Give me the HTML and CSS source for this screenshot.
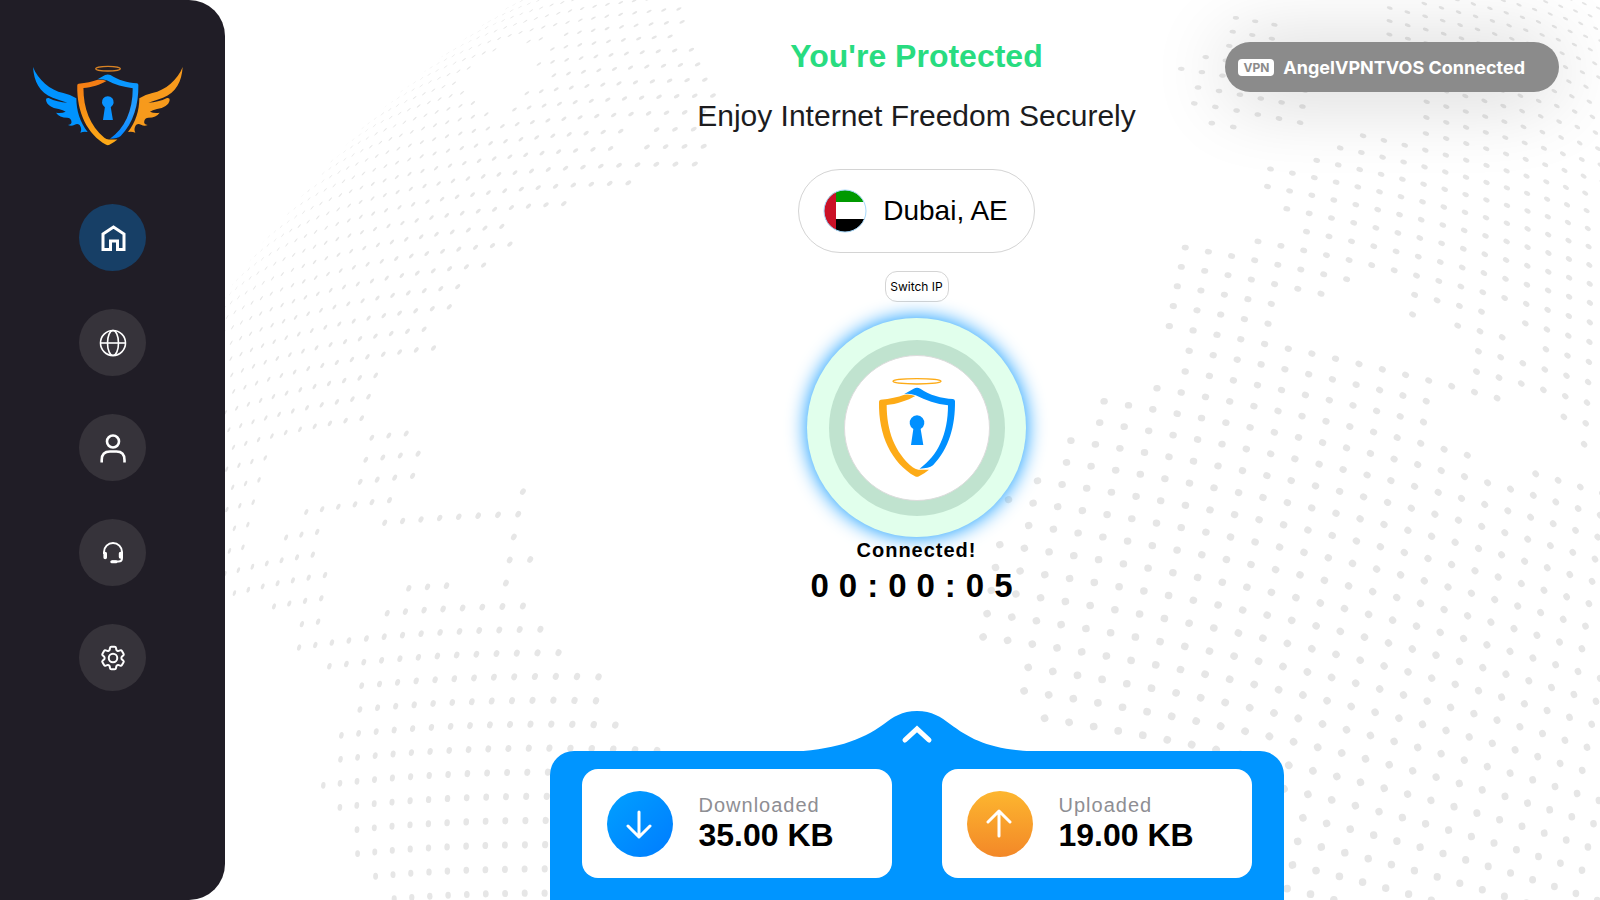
FILE: index.html
```
<!DOCTYPE html>
<html lang="en">

<head>
    <meta charset="UTF-8" />
    <meta name="viewport" content="width=device-width, initial-scale=1.0" />
    <title>Angel VPN</title>
    <link rel="stylesheet" href="styles.css">
</head>

<body>
    <svg id="globe" class="globe" viewBox="0 0 1600 900" preserveAspectRatio="xMidYMid slice" aria-hidden="true"></svg>

    <aside class="sidebar">
        <svg class="logo" viewBox="93 70 462 255" role="img" aria-label="Angel VPN">
            <defs>
                <linearGradient id="logoOrange" x1="0" y1="0" x2="0" y2="1">
                    <stop offset="0" stop-color="#f47b14" />
                    <stop offset="1" stop-color="#fdab17" />
                </linearGradient>
                <linearGradient id="logoBlue" x1="0" y1="0" x2="0" y2="1">
                    <stop offset="0" stop-color="#0096ff" />
                    <stop offset="0.6" stop-color="#2a9cff" />
                    <stop offset="1" stop-color="#0084ff" />
                </linearGradient>
                <path id="wing" d="M99 82C114 120 150 152 190 160Q210 164 229 176C229 212 240 248 263 277Q252 274 241 279Q247 268 239 256Q232 250 224 255Q214 261 204 256Q217 254 214 243Q211 234 202 234Q178 234 168 219Q184 222 197 216Q190 211 176 208C156 205 140 196 138 181Q137 174 146 175Q172 188 202 189Q180 182 158 174C118 158 102 126 99 82Z" />
            </defs>
            <use href="#wing" fill="#0093ff" />
            <use href="#wing" fill="#f79a1c" transform="matrix(-1 0 0 1 647 0)" />
            <ellipse cx="324" cy="87" rx="37" ry="7" fill="none" stroke="#d98324" stroke-width="4" />
            <g transform="matrix(.804 0 0 .796 -7.8 -108)">
                <path fill="url(#logoOrange)" d="M407 291C385 304 350 316 321 318C321 395 345 460 399 505Q406 511 416 512H448Q435 523 418 532Q412 535 406 532C335 490 296 410 298 308Q298 303 303 302Q345 298 374 287Q392 285 407 291Z" />
                <path fill="url(#logoBlue)" d="M374 285L402 269Q412 264 422 269C450 288 485 298 520 300Q526 301 526 307C527 380 508 450 460 499Q447 509 420 509C475 470 505 405 505 319C470 315 438 305 408 289Q392 283 374 285Z" />
                <path fill="#0a93ff" d="M401 390A22 22 0 1 1 423 390L431 438H394Z" />
            </g>
        </svg>

        <nav class="menu">
            <a class="menu-item active" href="#home" aria-label="Home">
                <svg width="26" height="28" viewBox="0 0 26 28" fill="none" stroke="#fff" stroke-width="3">
                    <path d="M3 10L13.500 3L24 10V25.500H17.500V17H10.500V25.500H3Z" />
                </svg>
            </a>
            <a class="menu-item" href="#locations" aria-label="Locations">
                <svg width="28" height="28" viewBox="0 0 28 28" fill="none" stroke="#fff" stroke-width="1.600">
                    <circle cx="14" cy="14" r="12.500" />
                    <ellipse cx="14" cy="14" rx="5.500" ry="12.500" />
                    <path d="M1.500 14H26.500" />
                </svg>
            </a>
            <a class="menu-item" href="#account" aria-label="Account">
                <svg width="28" height="30" viewBox="0 0 28 30" fill="none" stroke="#fff" stroke-width="2.600">
                    <circle cx="14" cy="8.500" r="6" />
                    <path d="M2.700 29.500V27Q2.700 18.500 11 18.500H17.500Q25.500 18.500 25.500 27V29.500" />
                </svg>
            </a>
            <a class="menu-item" href="#support" aria-label="Support">
                <svg width="22" height="22" viewBox="0 0 22 22" fill="none" stroke="#fff" stroke-width="2">
                    <path d="M2 12V10A9 9 0 0 1 20 10V16Q20 19.500 16.500 19.500H10" />
                    <path d="M9.800 19.800H14" stroke-width="3" stroke-linecap="round" />
                    <path d="M3.200 11.500V15.500M18.600 11.500V15" stroke-width="3.600" stroke-linecap="round" />
                </svg>
            </a>
            <a class="menu-item" href="#settings" aria-label="Settings">
                <svg width="30" height="30" viewBox="0 0 24 24" fill="none" stroke="#fff" stroke-width="1.600">
                    <path d="M9.594 3.940c.09-.542.56-.94 1.110-.94h2.593c.55 0 1.020.398 1.110.94l.213 1.281c.063.374.313.686.645.87.074.04.147.083.22.127.325.196.72.257 1.075.124l1.217-.456a1.125 1.125 0 0 1 1.370.49l1.296 2.247a1.125 1.125 0 0 1-.26 1.431l-1.003.827c-.293.241-.438.613-.43.992a7.723 7.723 0 0 1 0 .255c-.008.378.137.75.43.991l1.004.827c.424.35.534.955.26 1.430l-1.298 2.247a1.125 1.125 0 0 1-1.369.491l-1.217-.456c-.355-.133-.75-.072-1.076.124a6.470 6.470 0 0 1-.22.128c-.331.183-.581.495-.644.869l-.213 1.281c-.09.543-.56.94-1.110.94h-2.594c-.55 0-1.019-.398-1.110-.94l-.213-1.281c-.062-.374-.312-.686-.644-.87a6.520 6.520 0 0 1-.22-.127c-.325-.196-.72-.257-1.076-.124l-1.217.456a1.125 1.125 0 0 1-1.369-.49l-1.297-2.247a1.125 1.125 0 0 1 .26-1.431l1.004-.827c.292-.24.437-.613.43-.991a6.932 6.932 0 0 1 0-.255c.007-.38-.138-.751-.43-.992l-1.004-.827a1.125 1.125 0 0 1-.26-1.430l1.297-2.247a1.125 1.125 0 0 1 1.370-.491l1.216.456c.356.133.751.072 1.076-.124.072-.044.146-.086.22-.128.332-.183.582-.495.644-.869l.214-1.280Z" />
                    <circle cx="12" cy="12" r="3.400" />
                </svg>
            </a>
        </nav>
    </aside>

    <main class="main">
        <h1>You're Protected</h1>
        <p class="subtitle">Enjoy Internet Freedom Securely</p>

        <button class="location">
            <svg class="flag" viewBox="0 0 44 44" aria-hidden="true">
                <clipPath id="round"><circle cx="22" cy="22" r="21" /></clipPath>
                <g clip-path="url(#round)">
                    <rect width="44" height="44" fill="#fff" />
                    <rect width="44" height="13" fill="#090" />
                    <rect y="30" width="44" height="14" fill="#000" />
                    <rect width="13" height="44" fill="#cb1127" />
                </g>
                <circle cx="22" cy="22" r="21" fill="none" stroke="#a6d8fb" />
            </svg>
            Dubai, AE
        </button>
        <button class="switch">Switch IP</button>

        <button class="connect" aria-label="Disconnect">
            <span class="ring">
                <span class="core">
                    <svg width="78" height="101" viewBox="295 234 234 303" aria-hidden="true">
                        <ellipse cx="412" cy="247" rx="72" ry="8" fill="none" stroke="#fdab17" stroke-width="4" />
                        <path fill="#fdab17" d="M407 291C385 304 350 316 321 318C321 395 345 460 399 505Q406 511 416 512H448Q435 523 418 532Q412 535 406 532C335 490 296 410 298 308Q298 303 303 302Q345 298 374 287Q392 285 407 291Z" />
                        <path fill="#0090ff" d="M374 285L402 269Q412 264 422 269C450 288 485 298 520 300Q526 301 526 307C527 380 508 450 460 499Q447 509 420 509C475 470 505 405 505 319C470 315 438 305 408 289Q392 283 374 285Z" />
                        <path fill="#0090ff" d="M401 390A22 22 0 1 1 423 390L431 438H394Z" />
                    </svg>
                </span>
            </span>
        </button>
        <div class="status">Connected!</div>
        <div class="timer">00:00:05</div>

        <section class="panel">
            <svg class="bump" width="260" height="42" viewBox="0 0 260 42" aria-hidden="true">
                <path fill="#0095ff" d="M0 42V41C46 39 74 30 97 13C106 6 115 0 130 0S154 6 163 13C186 30 206 40 260 41V42Z" />
                <path d="M118 29L130 18L142 29" fill="none" stroke="#fff" stroke-width="5" stroke-linecap="round" />
            </svg>
            <div class="card">
                <span class="arrow down">
                    <svg width="30" height="30" viewBox="0 0 30 30" fill="none" stroke="#fff" stroke-width="3" stroke-linecap="round" stroke-linejoin="round">
                        <path d="M14 3V28M3 17L14 28L25 17" />
                    </svg>
                </span>
                <div class="traffic">
                    <div class="label">Downloaded</div>
                    <div class="value">35.00 KB</div>
                </div>
            </div>
            <div class="card">
                <span class="arrow up">
                    <svg width="30" height="30" viewBox="0 0 30 30" fill="none" stroke="#fff" stroke-width="3" stroke-linecap="round" stroke-linejoin="round">
                        <path d="M14 27V2M3 13L14 2L25 13" />
                    </svg>
                </span>
                <div class="traffic">
                    <div class="label">Uploaded</div>
                    <div class="value">19.00 KB</div>
                </div>
            </div>
        </section>
    </main>

    <div class="toast" role="status">
        <span class="badge">VPN</span>
        AngelVPNTVOS Connected
    </div>

    <script src="globe.js"></script>
</body>

</html>
```
FILE: styles.css
```
* {
    box-sizing: border-box;
}

body {
    margin: 0;
    min-height: 100vh;
    display: flex;
    background: #fff;
    color: #000;
    font-family: "Liberation Sans", Arial, sans-serif;
}

button {
    padding: 0;
    border: none;
    background: #fff;
    color: #000;
    font-family: inherit;
    cursor: pointer;
}

.globe {
    position: absolute;
    inset: 0;
    width: 100%;
    height: 100%;
    z-index: -1;
    fill: #e6e6e6;
}

/* sidebar */
.sidebar {
    flex: 0 0 225px;
    display: flex;
    flex-direction: column;
    padding-top: 63px;
    border-radius: 0 36px 36px 0;
    background: #201d26;
}

.logo {
    width: 154px;
    height: 85px;
    margin-left: 31px;
}

.menu {
    display: flex;
    flex-direction: column;
    align-items: center;
    gap: 38px;
    margin-top: 56px;
}

.menu-item {
    display: flex;
    align-items: center;
    justify-content: center;
    width: 67px;
    height: 67px;
    border-radius: 50%;
    background: #36333a;
}

.menu-item.active {
    background: #173f66;
}

/* main column */
.main {
    flex: 1;
    display: flex;
    flex-direction: column;
    align-items: center;
    padding: 36px 0 0 8px;
}

h1 {
    margin: 0;
    font-size: 32px;
    line-height: 40px;
    color: #28dc80;
}

.subtitle {
    margin: 20px 0 33px;
    font-size: 30px;
    line-height: 40px;
    color: #1c1c1e;
}

.location {
    display: flex;
    align-items: center;
    gap: 16px;
    height: 84px;
    padding: 0 26px 0 24px;
    border: 1px solid #d4d4d4;
    border-radius: 42px;
    font-size: 28px;
}

.flag {
    width: 44px;
    height: 44px;
}

.switch {
    width: 64px;
    height: 31px;
    margin: 18px 0 16px;
    border: 1px solid #d4d4d4;
    border-radius: 12px;
    font-family: Inter, sans-serif;
    font-size: 12px;
}

.connect,
.ring,
.core {
    display: flex;
    align-items: center;
    justify-content: center;
    border-radius: 50%;
}

.connect {
    width: 219px;
    height: 219px;
    background: #e1ffec;
    box-shadow: 0 0 20px #0094ff;
}

.ring {
    width: 176px;
    height: 176px;
    background: #c0e3cf;
}

.core {
    width: 146px;
    height: 146px;
    border: 1px solid #dcdcdc;
    background: #fff;
}

.status {
    font-size: 20px;
    font-weight: bold;
    line-height: 26px;
    letter-spacing: 1px;
}

.timer {
    margin-top: 3px;
    font-size: 33px;
    font-weight: bold;
    line-height: 40px;
    letter-spacing: 10px;
}

/* traffic panel */
.panel {
    position: relative;
    display: flex;
    gap: 50px;
    margin-top: auto;
    padding: 18px 32px 22px;
    border-radius: 24px 24px 0 0;
    background: #0095ff;
}

.bump {
    position: absolute;
    left: 50%;
    bottom: 100%;
    margin: 0 0 -2px -130px;
}

.card {
    display: flex;
    align-items: center;
    gap: 26px;
    width: 310px;
    height: 109px;
    padding-left: 25px;
    border-radius: 16px;
    background: #fff;
}

.arrow {
    display: flex;
    align-items: center;
    justify-content: center;
    width: 66px;
    height: 66px;
    border-radius: 50%;
}

.down {
    background: linear-gradient(135deg, #00a0ff, #007cff);
}

.up {
    background: linear-gradient(#fdb62f, #f38828);
}

.traffic {
    padding-bottom: 2px;
}

.label {
    font-size: 20px;
    line-height: 24px;
    letter-spacing: 1px;
    color: #8e8e93;
}

.value {
    font-size: 32px;
    font-weight: bold;
    line-height: 36px;
}

/* system notification over the page */
.toast {
    position: absolute;
    top: 42px;
    right: 41px;
    display: flex;
    align-items: center;
    gap: 9px;
    height: 50px;
    padding: 0 34px 0 13px;
    border-radius: 25px;
    background: #8b8b8b;
    box-shadow: 0 4px 80px rgba(0, 0, 0, 0.2);
    color: #fff;
    font-family: Inter, sans-serif;
    font-size: 18px;
    font-weight: 700;
}

.badge {
    padding: 0 5px;
    border-radius: 4px;
    background: #fff;
    color: #8b8b8b;
    font-size: 12px;
    line-height: 17px;
}
```
FILE: globe.js
```
// dotted globe: lat/lng grid on a tilted sphere, kept only where there is land
const CX = 1115, CY = 885, R = 1068;
const ROLL = 10.5 * Math.PI / 180;
const TILT = -16 * Math.PI / 180;
const STEP_LAT = 1.3 * Math.PI / 180;
const STEP_LNG = 1.35 * Math.PI / 180;

const land = [
    // north
    [[180, 340], [400, 80], [520, -20], [700, -20], [687, 20], [678, 32], [683, 47], [712, 50], [715, 90], [708, 110], [710, 140], [700, 165], [693, 180],
     [680, 165], [645, 170], [638, 188], [580, 198], [576, 210], [570, 226], [560, 222], [558, 212], [518, 225], [508, 252], [490, 262], [486, 275],
     [466, 292], [460, 300], [444, 316], [438, 335], [432, 358], [385, 372], [378, 388], [372, 425], [338, 432], [320, 438], [272, 452], [266, 470],
     [262, 490], [257, 510], [250, 552], [275, 553], [278, 530], [300, 520], [292, 508], [352, 490], [352, 474], [358, 462], [358, 432], [412, 422],
     [426, 440], [424, 452], [420, 480], [418, 496], [330, 512], [328, 525], [322, 552], [335, 558], [334, 575], [332, 590], [330, 612], [329, 635],
     [294, 640], [292, 628], [270, 622], [260, 604], [236, 600], [234, 614], [180, 620]],
    [[372, 535], [374, 508], [464, 496], [466, 511], [502, 508], [505, 489], [524, 489], [522, 508], [536, 512], [533, 545], [529, 570], [528, 582],
     [508, 582], [508, 560], [511, 540], [508, 528], [372, 545]],
    // south
    [[395, 590], [455, 580], [456, 604], [492, 604], [494, 580], [524, 580], [522, 600], [526, 622], [540, 624], [542, 645], [574, 648], [578, 668],
     [610, 672], [608, 695], [610, 715], [628, 720], [632, 740], [665, 745], [700, 800], [700, 900], [362, 900], [360, 872], [345, 850], [343, 830],
     [330, 810], [316, 800], [318, 785], [328, 780], [328, 745], [342, 722], [356, 715], [357, 680], [330, 672], [328, 660], [292, 660], [292, 645],
     [375, 635], [376, 612], [394, 608]],
    // east
    [[1226, 14], [1280, 22], [1284, 50], [1318, 96], [1314, 140], [1235, 126], [1216, 138], [1206, 134], [1190, 104], [1176, 70], [1198, 45], [1222, 44]],
    [[1420, -10], [1410, 0], [1376, 12], [1376, 45], [1390, 80], [1440, 92], [1418, 100], [1418, 130], [1402, 134], [1378, 128], [1345, 142], [1325, 150],
     [1300, 160], [1255, 150], [1247, 180], [1268, 205], [1288, 215], [1284, 232], [1240, 240], [1190, 230], [1180, 260], [1172, 300], [1160, 385],
     [1130, 396], [1105, 392], [1098, 425], [1070, 432], [1064, 465], [1035, 478], [1008, 495], [1008, 510], [1024, 514], [1024, 535], [996, 542],
     [978, 650], [1020, 660], [1016, 708], [1036, 720], [1040, 740], [1150, 760], [1150, 910], [1610, 910], [1610, -10]]
];

const water = [
    [[560, 32], [533, 42], [510, 42], [480, 58], [467, 73], [450, 92], [467, 93], [492, 105], [495, 117], [487, 132], [483, 143], [497, 128],
     [510, 105], [520, 90], [537, 85], [542, 77], [535, 68], [548, 52]],
    [[623, 133], [647, 123], [638, 150], [617, 157]],
    [[1289, 293], [1337, 295], [1360, 282], [1388, 287], [1404, 295], [1402, 313], [1398, 357], [1375, 359], [1351, 353], [1334, 345], [1333, 327],
     [1323, 326], [1322, 343], [1303, 342], [1287, 332], [1287, 307]],
    [[1415, 295], [1433, 301], [1452, 307], [1450, 325], [1472, 333], [1469, 367], [1466, 384], [1447, 379], [1423, 372], [1407, 367], [1408, 347], [1415, 308]],
    [[1490, 307], [1507, 302], [1523, 308], [1523, 327], [1543, 333], [1543, 365], [1527, 358], [1508, 353], [1509, 333], [1488, 325]],
    [[1424, 420], [1445, 412], [1453, 402], [1470, 398], [1495, 406], [1523, 393], [1545, 402], [1560, 412], [1558, 432], [1578, 440], [1574, 460],
     [1610, 466], [1610, 495], [1590, 490], [1535, 470], [1510, 470], [1500, 482], [1495, 480], [1480, 455], [1437, 441], [1422, 435]]
];

function inside(x, y, poly) {
    let hit = false;
    for (let i = 0, j = poly.length - 1; i < poly.length; j = i++) {
        const [xi, yi] = poly[i];
        const [xj, yj] = poly[j];
        if ((yi > y) !== (yj > y) && x < (xj - xi) * (y - yi) / (yj - yi) + xi) hit = !hit;
    }
    return hit;
}

function project(lat, lng) {
    const x = Math.cos(lat) * Math.sin(lng);
    const y = Math.sin(lat) * Math.cos(TILT) - Math.cos(lat) * Math.cos(lng) * Math.sin(TILT);
    const z = Math.sin(lat) * Math.sin(TILT) + Math.cos(lat) * Math.cos(lng) * Math.cos(TILT);
    return {
        x: CX + R * (x * Math.cos(ROLL) + y * Math.sin(ROLL)),
        y: CY - R * (y * Math.cos(ROLL) - x * Math.sin(ROLL)),
        z: z
    };
}

let dots = "";
for (let i = -68; i <= 68; i++) {
    for (let j = -68; j <= 68; j++) {
        const p = project(i * STEP_LAT, j * STEP_LNG);
        if (p.z <= 0.03 || p.x < 200 || p.x > 1605 || p.y < -5 || p.y > 905) continue;
        if (!land.some(poly => inside(p.x, p.y, poly))) continue;
        if (water.some(poly => inside(p.x, p.y, poly))) continue;
        const angle = Math.atan2(p.y - CY, p.x - CX) * 180 / Math.PI;
        // dots get smaller towards the edge of the sphere
        const r = 2.2 + 1.7 * p.z;
        dots += `<ellipse rx="${(r * p.z).toFixed(2)}" ry="${r.toFixed(2)}" transform="translate(${p.x.toFixed(1)} ${p.y.toFixed(1)}) rotate(${angle.toFixed(1)})"/>`;
    }
}
document.getElementById("globe").innerHTML = dots;
```
